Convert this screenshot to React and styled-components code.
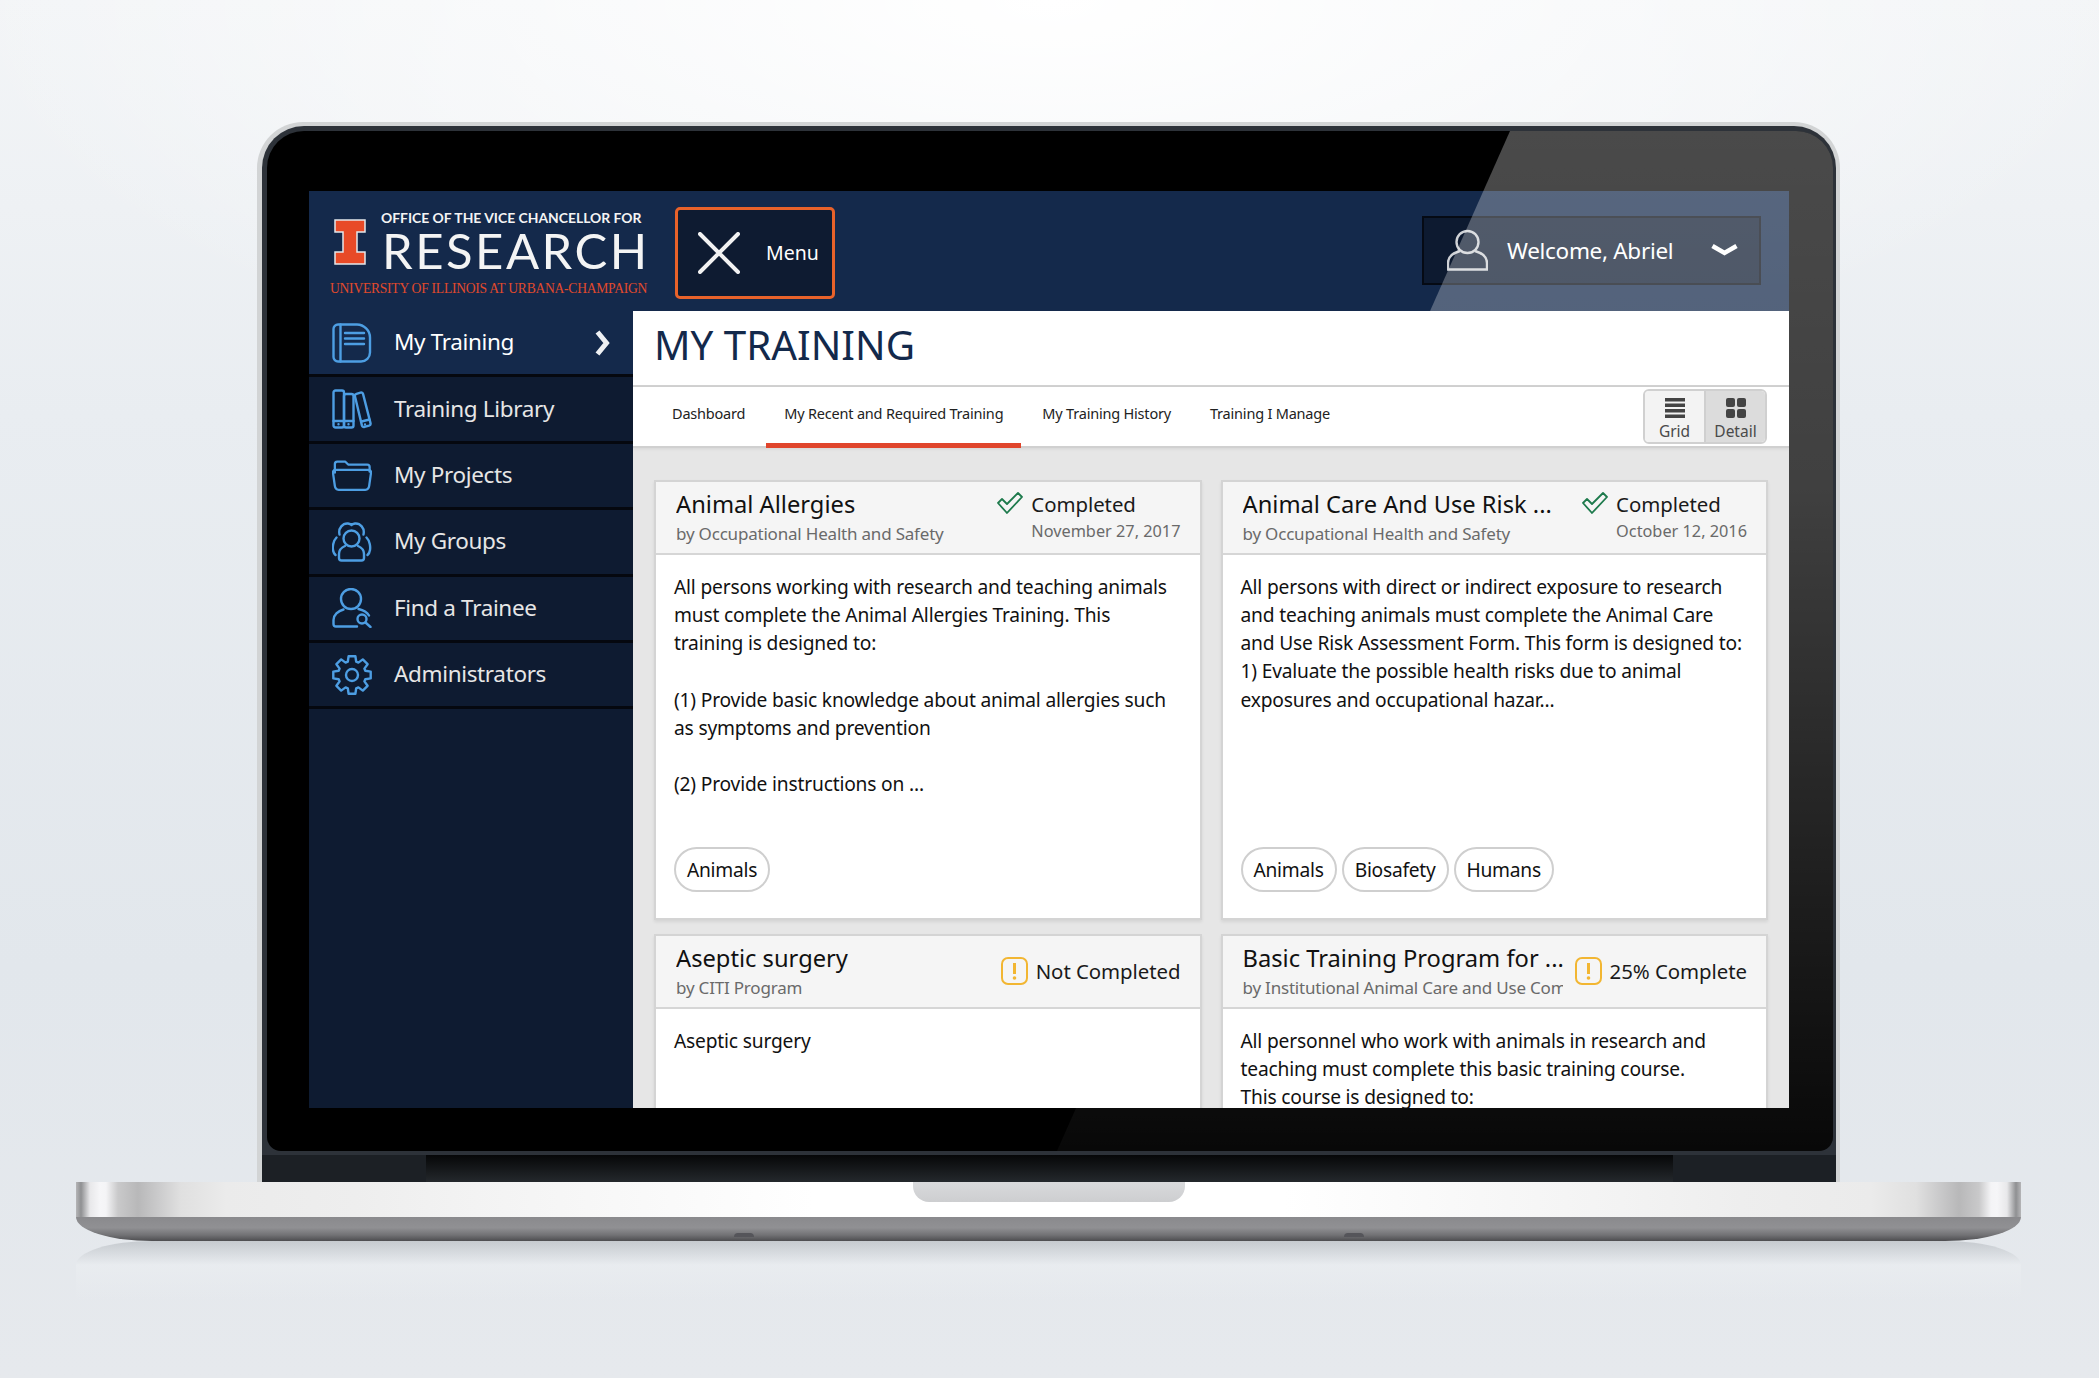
import React from "react";
import styled, { createGlobalStyle } from "styled-components";

const GlobalStyle = createGlobalStyle`
  html, body { margin: 0; padding: 0; }
  body { font-family: "Noto Sans", "Open Sans", sans-serif; color: #111; }
  * { box-sizing: border-box; }
`;

const Stage = styled.div`
  width: 2099px;
  height: 1378px;
  overflow: hidden;
  display: flex;
  flex-direction: column;
  align-items: center;
  padding: 122px 2px 0 0;
  background:
    radial-gradient(ellipse 1100px 420px at 50% 0, #ffffff 0%, rgba(255,255,255,0) 100%),
    linear-gradient(180deg, #f3f5f7 0%, #e9edf1 30%, #e2e7ec 70%, #e6e9ed 100%);
`;

/* laptop lid */
const Lid = styled.div`
  width: 1583px;
  padding: 4px 4px 0 5px;
  background: #d2d4d5;
  border-radius: 46px 46px 0 0;
`;

const Ring = styled.div`
  background: #2d3239;
  border-radius: 42px 42px 0 0;
  padding: 5px 3px 0 5px;
`;

const Bezel = styled.div`
  position: relative;
  background: #000;
  border-radius: 37px 37px 14px 14px;
  padding: 60px 44px 43px 42px;
  margin-bottom: 4px;
`;

const Glare = styled.div`
  position: absolute;
  inset: 0;
  pointer-events: none;
  border-radius: 37px 37px 14px 14px;
  clip-path: polygon(1243px 0, 100% 0, 100% 100%, 790px 100%);
  background: linear-gradient(180deg, rgba(255,255,255,.29) 0%, rgba(255,255,255,.25) 35%, rgba(255,255,255,.03) 100%);
`;

const Hinge = styled.div`
  height: 27px;
  margin: 0 -3px 0 -5px;
  background: #1c2025;
  display: flex;
  justify-content: center;
`;

const HingeInner = styled.div`
  width: 1247px;
  background: linear-gradient(180deg, #060708 0%, #24282c 100%);
`;

const Screen = styled.div`
  height: 917px;
  overflow: hidden;
  display: grid;
  grid-template-columns: 324px minmax(0, 1fr);
  grid-template-rows: 120px minmax(0, 1fr);
  background: #fff;
`;

/* top header */
const Header = styled.header`
  grid-column: 1 / 3;
  background: #14294b;
  display: flex;
  align-items: center;
  padding: 0 28px 0 21px;
`;

const Logo = styled.div`
  width: 318px;
  display: flex;
  flex-direction: column;
  margin-top: 5px;
`;

const LogoTop = styled.div`
  display: flex;
  align-items: center;
  padding-left: 4px;
  gap: 15px;
`;

const LogoText = styled.div`
  display: flex;
  flex-direction: column;
  color: #f4f4f4;
`;

const Office = styled.div`
  font-family: "Lato", sans-serif;
  font-weight: 700;
  font-size: 13.9px;
  line-height: 16px;
  white-space: nowrap;
`;

const Research = styled.div`
  font-family: "Lato", sans-serif;
  font-size: 49px;
  line-height: 48px;
  letter-spacing: 2.5px;
  margin-left: 1px;
  white-space: nowrap;
`;

const University = styled.div`
  font-family: "Liberation Serif", serif;
  font-size: 13.6px;
  letter-spacing: -0.26px;
  line-height: 16px;
  color: #e2492b;
  white-space: nowrap;
  margin-top: 7px;
`;

const MenuButton = styled.button`
  margin: 3px 0 0 27px;
  width: 160px;
  height: 92px;
  background: #0e1b31;
  border: 3px solid #e8622a;
  border-radius: 5px;
  color: #fff;
  font-family: inherit;
  font-size: 19.5px;
  display: flex;
  align-items: center;
  padding: 0 0 0 20px;
  gap: 26px;
`;

const Welcome = styled.div`
  margin-left: auto;
  margin-top: -2px;
  width: 339px;
  height: 69px;
  background: #0d1a30;
  border: 2px solid #050a14;
  color: #fff;
  font-size: 22.5px;
  letter-spacing: -0.3px;
  display: flex;
  align-items: center;
  padding: 0 21px 0 23px;
`;

const WelcomeText = styled.span`
  margin-left: 19px;
  flex: 1;
  white-space: nowrap;
`;

/* sidebar */
const Sidebar = styled.nav`
  background: #0e1b31;
  display: flex;
  flex-direction: column;
`;

const NavRow = styled.div`
  height: 66.4px;
  flex: none;
  display: flex;
  align-items: center;
  padding: 0 23px 0 23px;
  gap: 22px;
  border-bottom: 3px solid #05080f;
  background: ${(p) => (p.$active ? "#14294b" : "transparent")};
  color: ${(p) => (p.$active ? "#fff" : "#e6e6e6")};
  font-size: 22.5px;
  letter-spacing: -0.35px;
  white-space: nowrap;
`;

const NavLabel = styled.span`
  flex: 1;
  margin-top: -2px;
`;

/* main panel */
const Main = styled.main`
  position: relative;
  z-index: 1;
  min-width: 0;
  overflow: hidden;
  background: #e6e6e6;
  display: flex;
  flex-direction: column;
`;

const TitleBar = styled.div`
  height: 76px;
  flex: none;
  background: #fff;
  border-bottom: 2px solid #d2d2d2;
  padding: 0 0 7px 21px;
  display: flex;
  align-items: center;
`;

const PageTitle = styled.h1`
  margin: 0;
  font-size: 40.3px;
  font-weight: 400;
  color: #13294b;
  white-space: nowrap;
`;

const TabBar = styled.div`
  height: 61px;
  flex: none;
  background: #fff;
  border-bottom: 2px solid #d0d0d0;
  box-shadow: 0 1px 3px rgba(0,0,0,.08);
  display: flex;
  align-items: stretch;
  gap: 3px;
  padding: 0 22px 0 21px;
`;

const Tab = styled.div`
  padding: 0 18px 4px;
  display: flex;
  align-items: center;
  font-size: 14.5px;
  letter-spacing: -0.2px;
  color: #222;
  white-space: nowrap;
  margin-bottom: -2px;
  border-bottom: 5px solid ${(p) => (p.$active ? "#e0452c" : "transparent")};
`;

const ViewToggle = styled.div`
  margin: 2px 0 2px auto;
  width: 124px;
  height: 55px;
  border: 2px solid #d0d0d0;
  border-radius: 6px;
  overflow: hidden;
  display: flex;
`;

const ViewButton = styled.div`
  flex: ${(p) => (p.$active ? "0 0 61px" : "1")};
  background: ${(p) => (p.$active ? "#dcdcdc" : "#f3f3f3")};
  border-left: ${(p) => (p.$active ? "2px solid #cfcfcf" : "none")};
  font-size: 15.5px;
  line-height: 18px;
  color: #4a4a4a;
  display: flex;
  flex-direction: column;
  align-items: center;
  padding-top: 7px;
  gap: 4px;
`;

const CardGrid = styled.div`
  display: grid;
  grid-template-columns: minmax(0, 1fr) minmax(0, 1fr);
  grid-auto-rows: 440px;
  gap: 14px 19px;
  padding: 32px 21px 0;
`;

const Card = styled.article`
  background: #fff;
  border: 2px solid #d4d4d4;
  box-shadow: 0 2px 3px rgba(0,0,0,.08);
  display: flex;
  flex-direction: column;
`;

const CardHeader = styled.div`
  height: 73px;
  flex: none;
  background: #f5f5f5;
  border-bottom: 2px solid #d6d6d6;
  padding: 0 19px 0 20px;
  display: flex;
  align-items: center;
  gap: 12px;
`;

const CardHeading = styled.div`
  flex: 1;
  min-width: 0;
  overflow: hidden;
  white-space: nowrap;
`;

const CardTitle = styled.div`
  font-size: 23.7px;
  line-height: 31px;
  color: #111;
`;

const CardBy = styled.div`
  font-size: 17px;
  letter-spacing: -0.2px;
  line-height: 26px;
  margin-top: 1px;
  color: #6a6a6a;
`;

const Status = styled.div`
  flex: none;
  display: flex;
  align-items: flex-start;
  gap: 8px;
  margin-top: -2px;
`;

const StatusText = styled.div`
  font-size: 20.4px;
  letter-spacing: -0.05px;
  line-height: 28px;
  color: #1a1a1a;
  white-space: nowrap;
`;

const StatusDate = styled.div`
  font-size: 16.3px;
  line-height: 25px;
  margin-top: 1px;
  color: #6a6a6a;
`;

const CardBody = styled.div`
  flex: 1;
  padding: 18px 18px 26px 18px;
  display: flex;
  flex-direction: column;
  justify-content: space-between;
`;

const BodyText = styled.p`
  margin: 0;
  font-size: 19.2px;
  letter-spacing: -0.18px;
  line-height: 28.15px;
  color: #111;
`;

const PillRow = styled.div`
  display: flex;
  gap: 5px;
`;

const Pill = styled.span`
  height: 45px;
  padding: 0 11px;
  border: 2px solid #cfcfcf;
  border-radius: 23px;
  font-size: 19.2px;
  letter-spacing: -0.25px;
  display: flex;
  align-items: center;
  color: #111;
`;

/* laptop base */
const Base = styled.div`
  width: 1945px;
  flex: none;
`;

const BaseTop = styled.div`
  height: 35px;
  display: flex;
  justify-content: center;
  background: linear-gradient(90deg,
    #b5b5b7 0, #8f9092 5px, #e8e8ea 14px, #f6f6f8 24px, #f4f4f6 30px, #c9c9ca 42px, #b8b8b9 62px, #cdcdce 85px, #e0e0e0 105px, #ebebeb 150px, #eeeeee 280px, #f3f3f3 400px, #ffffff 736px,
    #ffffff calc(100% - 736px), #f3f3f3 calc(100% - 400px), #eeeeee calc(100% - 280px), #ebebeb calc(100% - 150px), #e0e0e0 calc(100% - 105px), #cdcdce calc(100% - 85px), #b8b8b9 calc(100% - 62px), #c9c9ca calc(100% - 42px), #f4f4f6 calc(100% - 30px), #f6f6f8 calc(100% - 24px), #e8e8ea calc(100% - 14px), #8f9092 calc(100% - 5px), #b5b5b7 100%);
`;

const Notch = styled.div`
  width: 272px;
  height: 20px;
  border-radius: 0 0 16px 16px;
  background: linear-gradient(180deg, #d9dadc 0%, #cdced0 100%);
`;

const BaseBottom = styled.div`
  height: 24px;
  border-radius: 0 0 76px 76px / 0 0 24px 24px;
  background: linear-gradient(180deg, #8a8a8d 0%, #909093 45%, #727275 75%, #4d4d50 100%);
  display: flex;
  justify-content: center;
  align-items: flex-end;
  gap: 590px;
  padding-bottom: 4px;
`;

const Foot = styled.div`
  width: 20px;
  height: 4px;
  border-radius: 10px 10px 0 0;
  background: #55555a;
`;

const Reflection = styled.div`
  height: 60px;
  border-radius: 76px 76px 0 0 / 24px 24px 0 0;
  background: linear-gradient(180deg, rgba(140,146,152,.35) 0%, rgba(236,239,242,.5) 40%, rgba(236,239,242,0) 100%);
`;

const BLUE = "#4d9ee3";

const IconBase = ({ children, vw = 40, vh = 40, w = 40, h = 40 }) => (
  <svg width={w} height={h} viewBox={`0 0 ${vw} ${vh}`} fill="none" stroke={BLUE} strokeWidth="2.4" strokeLinecap="round" strokeLinejoin="round" style={{ flex: "none" }}>
    {children}
  </svg>
);

const BookIcon = () => (
  <IconBase>
    <path d="M6 1.500h19c7 0 13 6 13 13v15c0 5-4 9-9 9H6c-2.500 0-4.500-2-4.500-4.500V6c0-2.500 2-4.500 4.500-4.500z" />
    <path d="M8.500 1.500v37" />
    <path d="M13 10h19M13 15.500h19M13 21h19" />
  </IconBase>
);

const BooksIcon = () => (
  <IconBase>
    <rect x="1.500" y="1.500" width="10.500" height="37" rx="2" />
    <rect x="12" y="5" width="9.500" height="33.500" rx="2" />
    <path d="M23 7.500c-.4-1.500.2-2.300 1.500-2.700l4-1.200c1.300-.4 2.200.2 2.600 1.500l7.400 29c.3 1.300-.2 2.200-1.500 2.600l-4.500 1.200c-1.300.4-2.200-.2-2.600-1.500z" />
    <path d="M1.500 32h10.500M12 32h9.500M29.500 32.500l8-2" />
    <path d="M6.500 35.200v.1M16.500 35.200v.1M33 35.500v.1" />
  </IconBase>
);

const FolderIcon = () => (
  <IconBase vw={42} vh={32} h={31}>
    <path d="M3 13V4c0-1.500 1-2.500 2.500-2.500H14l3 3h20c1.500 0 2.500 1 2.500 2.500v5" />
    <path d="M4 10h34c2 0 3 1 3 3l-2 14c-.3 2.500-2 4-4 4H7c-2 0-3.700-1.500-4-4L1 13c0-2 1-3 3-3z" />
  </IconBase>
);

const GroupIcon = () => (
  <IconBase>
    <circle cx="19.500" cy="16.500" r="8" />
    <path d="M13 24c-3.500 1.500-6 4-6 8v4c0 1.500 1 2.500 2.500 2.500h20c1.500 0 2.500-1 2.500-2.500v-4c0-4-2.500-6.500-6-8" />
    <path d="M7.500 12.500C6 6 11 1 16 1.500c1.500.2 3 .8 3.500 1.500M31.500 12.500C33 6 28 1 23 1.500c-1.500.2-3 .8-3.500 1.500" />
    <path d="M4.500 15.500C1 19 .5 25 1 28c.3 2 1.300 4 2.500 5M34.500 15.500c3.500 3.500 4 9.500 3.500 12.500-.3 2-1.300 4-2.500 5" />
  </IconBase>
);

const FinderIcon = () => (
  <IconBase>
    <circle cx="19" cy="11" r="10" />
    <path d="M25 38.500H4c-1.500 0-2.500-1-2.500-2.500v-4c0-5 4.500-9 10-10.500M26.500 21c4.500 1 8.500 3 10.500 6.500" />
    <circle cx="30" cy="31" r="4.500" />
    <path d="M33.500 34.500l5 4.500" />
  </IconBase>
);

const gearPath = () => {
  const teeth = 8;
  const pts = [];
  for (let i = 0; i < teeth; i++) {
    const a = (i * 2 * Math.PI) / teeth;
    const step = (2 * Math.PI) / teeth;
    [[-0.34, 14], [-0.2, 19], [0.2, 19], [0.34, 14]].forEach(([f, r]) => {
      const t = a + f * step * 1.15;
      pts.push(`${(20 + r * Math.sin(t)).toFixed(1)} ${(20 - r * Math.cos(t)).toFixed(1)}`);
    });
  }
  return `M${pts.join("L")}Z`;
};

const GearIcon = () => (
  <IconBase>
    <path d={gearPath()} />
    <circle cx="20" cy="20" r="6" />
  </IconBase>
);

const Chevron = () => (
  <svg width="15" height="26" viewBox="0 0 15 26" fill="none" stroke="#eef0f3" strokeWidth="5" strokeLinejoin="miter">
    <path d="M2.500 2l9 11-9 11" />
  </svg>
);

const CloseX = () => (
  <svg width="42" height="42" viewBox="0 0 42 42" fill="none" stroke="#f2f2f2" strokeWidth="4" strokeLinecap="round" style={{ flex: "none" }}>
    <path d="M2 2l38 38M40 2L2 40" />
  </svg>
);

const UserOutline = () => (
  <svg width="41" height="42" viewBox="0 0 41 42" fill="none" stroke="#cfd2d6" strokeWidth="2.400" style={{ flex: "none" }}>
    <circle cx="20.500" cy="13" r="11" />
    <path d="M13 22C6 24 1 27 1 34v6.500h39V34c0-7-5-10-12-12" />
  </svg>
);

const ChevronDown = () => (
  <svg width="27" height="14" viewBox="0 0 27 14" fill="none" stroke="#fff" strokeWidth="4.500">
    <path d="M1.500 3l12 7 12-7" />
  </svg>
);

const CheckIcon = () => (
  <svg width="26" height="22" viewBox="0 0 26 22" fill="none" stroke="#1d7a4c" strokeWidth="1.800" strokeLinejoin="round" style={{ flex: "none", marginTop: 2 }}>
    <path d="M1 11l4-4 5 5L21 1l4 4L10 21z" />
  </svg>
);

const WarnIcon = () => (
  <svg width="27" height="28" viewBox="0 0 27 28" fill="none" style={{ flex: "none" }}>
    <rect x="1" y="1" width="25" height="26" rx="6" stroke="#f2b632" strokeWidth="2" />
    <path d="M13.500 6v11" stroke="#f2b632" strokeWidth="3" />
    <circle cx="13.500" cy="21" r="1.800" fill="#f2b632" />
  </svg>
);

const GridGlyph = () => (
  <svg width="20" height="20" viewBox="0 0 20 20" fill="#444">
    <rect y="0" width="20" height="3.500" />
    <rect y="5.500" width="20" height="3.500" />
    <rect y="11" width="20" height="3.500" />
    <rect y="16.500" width="20" height="3.500" />
  </svg>
);

const DetailGlyph = () => (
  <svg width="20" height="20" viewBox="0 0 20 20" fill="#444">
    <rect width="9" height="9" rx="2" />
    <rect x="11" width="9" height="9" rx="2" />
    <rect y="11" width="9" height="9" rx="2" />
    <rect x="11" y="11" width="9" height="9" rx="2" />
  </svg>
);

const LogoI = () => (
  <svg width="32" height="46" viewBox="0 0 32 46" style={{ flex: "none" }}>
    <path d="M1 1h30v12h-8v20h8v12H1V33h8V13H1z" fill="#e84a27" stroke="#e4e7ec" strokeWidth="1.500" />
  </svg>
);

const navItems = [
  { label: "My Training", Icon: BookIcon, active: true },
  { label: "Training Library", Icon: BooksIcon },
  { label: "My Projects", Icon: FolderIcon },
  { label: "My Groups", Icon: GroupIcon },
  { label: "Find a Trainee", Icon: FinderIcon },
  { label: "Administrators", Icon: GearIcon },
];

const tabs = ["Dashboard", "My Recent and Required Training", "My Training History", "Training I Manage"];

const cards = [
  {
    title: "Animal Allergies",
    by: "by Occupational Health and Safety",
    status: "Completed",
    date: "November 27, 2017",
    body: ["All persons working with research and teaching animals must complete the Animal Allergies Training. This training is designed to:", "", "(1) Provide basic knowledge about animal allergies such as symptoms and prevention", "", "(2) Provide instructions on ..."],
    pills: ["Animals"],
  },
  {
    title: "Animal Care And Use Risk ...",
    by: "by Occupational Health and Safety",
    status: "Completed",
    date: "October 12, 2016",
    body: ["All persons with direct or indirect exposure to research and teaching animals must complete the Animal Care and Use Risk Assessment Form. This form is designed to:", "1) Evaluate the possible health risks due to animal exposures and occupational hazar..."],
    pills: ["Animals", "Biosafety", "Humans"],
  },
  {
    title: "Aseptic surgery",
    by: "by CITI Program",
    status: "Not Completed",
    body: ["Aseptic surgery"],
    pills: [],
  },
  {
    title: "Basic Training Program for ...",
    by: "by Institutional Animal Care and Use Committee",
    status: "25% Complete",
    body: ["All personnel who work with animals in research and teaching must complete this basic training course.", "This course is designed to:"],
    pills: [],
  },
];

const TrainingCard = ({ card }) => (
  <Card>
    <CardHeader>
      <CardHeading>
        <CardTitle>{card.title}</CardTitle>
        <CardBy>{card.by}</CardBy>
      </CardHeading>
      <Status>
        {card.date ? <CheckIcon /> : <WarnIcon />}
        <div>
          <StatusText>{card.status}</StatusText>
          {card.date && <StatusDate>{card.date}</StatusDate>}
        </div>
      </Status>
    </CardHeader>
    <CardBody>
      <BodyText>
        {card.body.map((line, i) => (
          <React.Fragment key={i}>
            {line}
            {i < card.body.length - 1 && <br />}
          </React.Fragment>
        ))}
      </BodyText>
      {card.pills.length > 0 && (
        <PillRow>
          {card.pills.map((p) => (
            <Pill key={p}>{p}</Pill>
          ))}
        </PillRow>
      )}
    </CardBody>
  </Card>
);

const App = () => (
  <Stage>
    <GlobalStyle />
    <Lid>
      <Ring>
        <Bezel>
          <Screen>
            <Header>
              <Logo>
                <LogoTop>
                  <LogoI />
                  <LogoText>
                    <Office>OFFICE OF THE VICE CHANCELLOR FOR</Office>
                    <Research>RESEARCH</Research>
                  </LogoText>
                </LogoTop>
                <University>UNIVERSITY OF ILLINOIS AT URBANA-CHAMPAIGN</University>
              </Logo>
              <MenuButton>
                <CloseX />
                Menu
              </MenuButton>
              <Welcome>
                <UserOutline />
                <WelcomeText>Welcome, Abriel</WelcomeText>
                <ChevronDown />
              </Welcome>
            </Header>
            <Sidebar>
              {navItems.map(({ label, Icon, active }) => (
                <NavRow key={label} $active={active}>
                  <Icon />
                  <NavLabel>{label}</NavLabel>
                  {active && <Chevron />}
                </NavRow>
              ))}
            </Sidebar>
            <Main>
              <TitleBar>
                <PageTitle>MY TRAINING</PageTitle>
              </TitleBar>
              <TabBar>
                {tabs.map((t, i) => (
                  <Tab key={t} $active={i === 1}>{t}</Tab>
                ))}
                <ViewToggle>
                  <ViewButton>
                    <GridGlyph />
                    Grid
                  </ViewButton>
                  <ViewButton $active>
                    <DetailGlyph />
                    Detail
                  </ViewButton>
                </ViewToggle>
              </TabBar>
              <CardGrid>
                {cards.map((c) => (
                  <TrainingCard key={c.title} card={c} />
                ))}
              </CardGrid>
            </Main>
          </Screen>
          <Glare />
        </Bezel>
        <Hinge>
          <HingeInner />
        </Hinge>
      </Ring>
    </Lid>
    <Base>
      <BaseTop>
        <Notch />
      </BaseTop>
      <BaseBottom>
        <Foot />
        <Foot />
      </BaseBottom>
      <Reflection />
    </Base>
  </Stage>
);

export default App;
